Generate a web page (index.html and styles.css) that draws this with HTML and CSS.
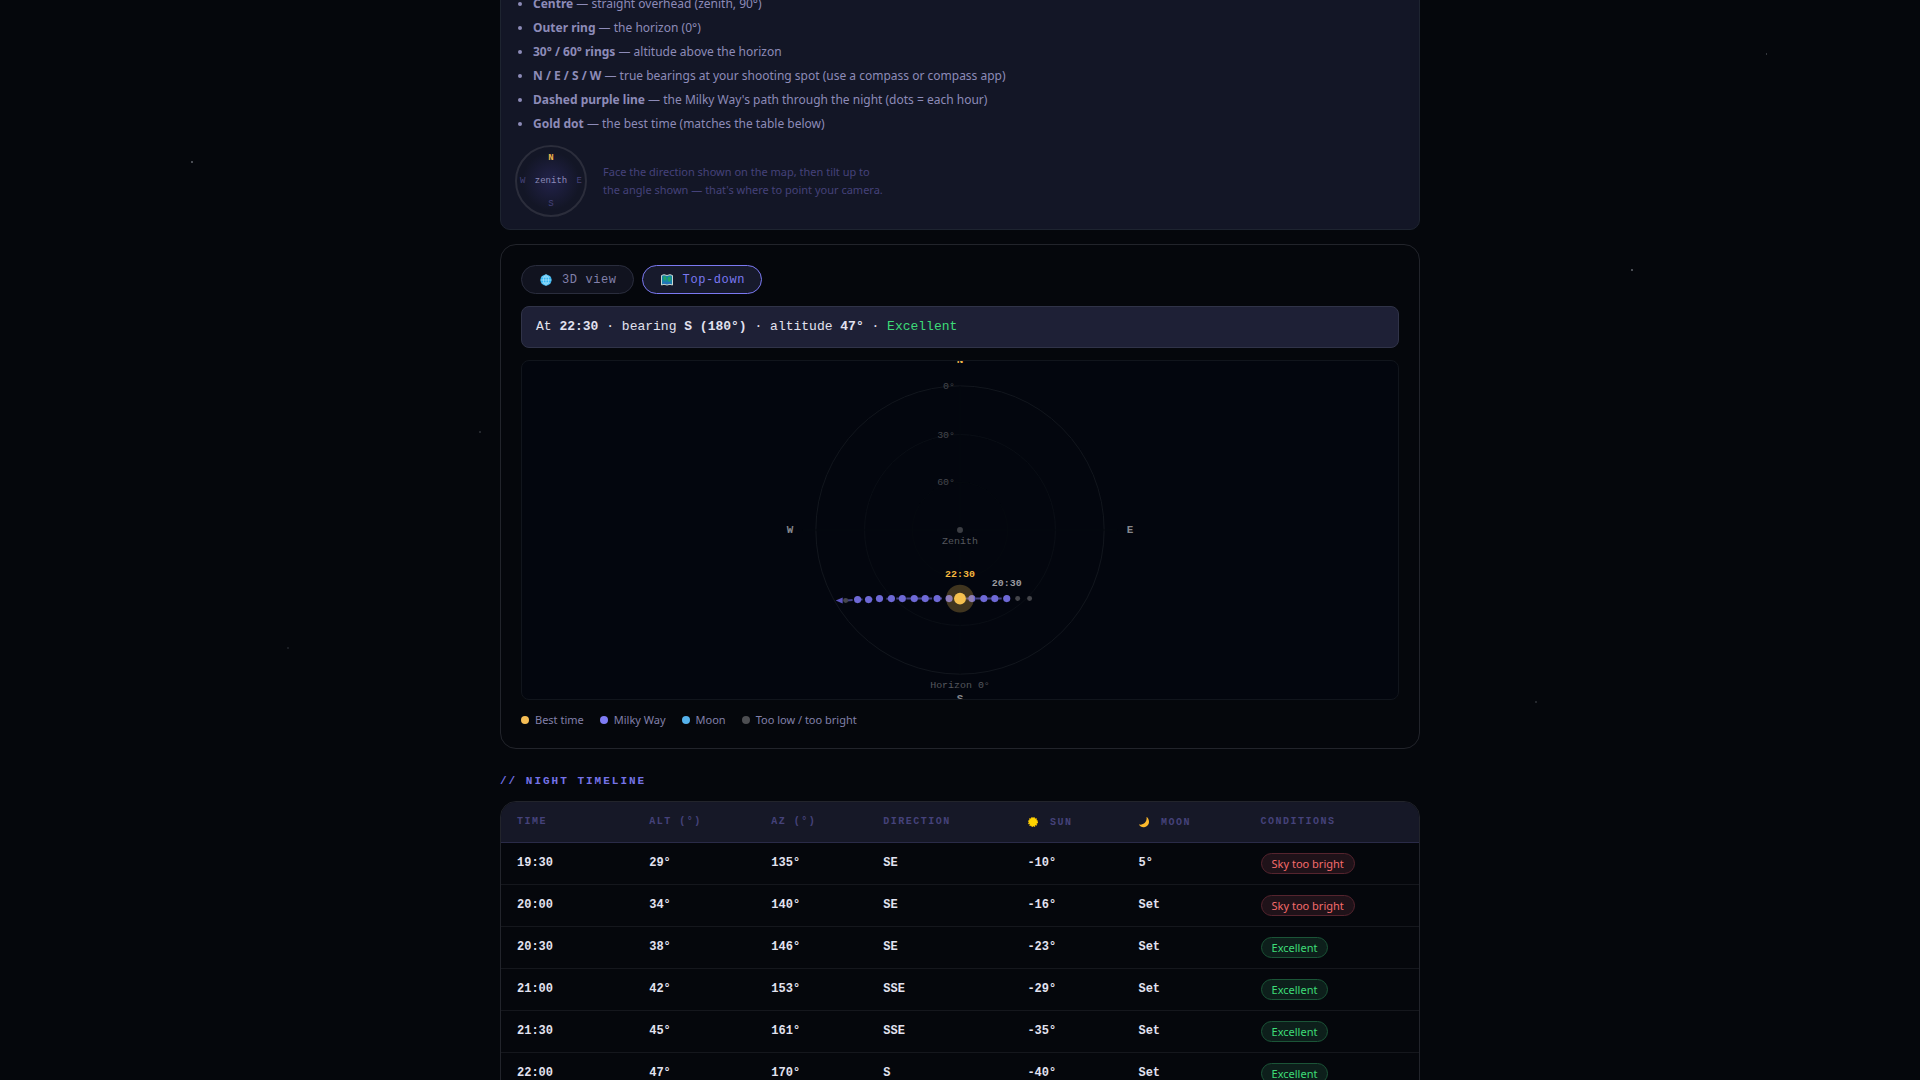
FILE: index.html
```
<!DOCTYPE html>
<html lang="en">
<head>
  <meta charset="UTF-8">
  <meta name="viewport" content="width=device-width, initial-scale=1.0">
  <title>Milky Way planner</title>
  <link rel="stylesheet" href="styles.css">
</head>
<body>

<main class="page">

  <!-- How to read the map -->
  <section class="guide">
    <ul class="guide-list">
      <li><strong>Centre</strong> — straight overhead (zenith, 90°)</li>
      <li><strong>Outer ring</strong> — the horizon (0°)</li>
      <li><strong>30° / 60° rings</strong> — altitude above the horizon</li>
      <li><strong>N / E / S / W</strong> — true bearings at your shooting spot (use a compass or compass app)</li>
      <li><strong>Dashed purple line</strong> — the Milky Way's path through the night (dots = each hour)</li>
      <li><strong>Gold dot</strong> — the best time (matches the table below)</li>
    </ul>
    <div class="guide-foot">
      <div class="compass">
        <span class="north">N</span>
        <div class="compass-mid"><span>W</span><span class="zenith">zenith</span><span>E</span></div>
        <span>S</span>
      </div>
      <p>Face the direction shown on the map, then tilt up to<br>the angle shown — that's where to point your camera.</p>
    </div>
  </section>

  <!-- Sky map -->
  <section class="map-card">
    <div class="tabs">
      <button type="button" class="tab">
        <svg class="icon" viewBox="0 0 12 12" aria-hidden="true">
          <circle cx="6" cy="6" r="5.6" fill="#35b6f2"/>
          <path d="M6 .5v11M.5 6h11M1.5 3h9M1.5 9h9M6 .5C2.4 3.5 2.4 8.5 6 11.5C9.6 8.5 9.6 3.5 6 .5" fill="none" stroke="#c4efff" stroke-width=".6"/>
        </svg>
        3D view
      </button>
      <button type="button" class="tab active">
        <svg class="icon" viewBox="0 0 12 12" aria-hidden="true">
          <path d="M.5 1.5L3 .7L6 1.5L9 .7L11.5 1.5V11L9 10.3L6 11L3 10.3L.5 11Z" fill="#1683a8" stroke="#c9d6d3" stroke-width="1"/>
          <path d="M2.5 2.5L5 2.2L5.5 5L4 7L2.5 5ZM7 3L9.5 2.5L10 6L8 8L6.5 5.5Z" fill="#22a565"/>
          <path d="M2 8.5L5 9.3L8 8.8L10 9.2" fill="none" stroke="#2f64c8"/>
        </svg>
        Top-down
      </button>
    </div>

    <div class="readout">At <strong>22:30</strong> · bearing <strong>S (180°)</strong> · altitude <strong>47°</strong> · <span class="good">Excellent</span></div>

    <svg class="sky" viewBox="-439 -170 878 340" role="img" aria-label="Top-down sky map">
      <g class="rings">
        <circle r="145" class="horizon"/>
        <circle r="96"/>
        <circle r="48" class="inner"/>
        <path d="M-158 0H158M0 -145V145" class="inner"/>
      </g>
      <g class="alt">
        <text x="-5" y="-142" text-anchor="end">0°</text>
        <text x="-5" y="-93" text-anchor="end">30°</text>
        <text x="-5" y="-45" text-anchor="end">60°</text>
      </g>
      <circle r="3" fill="#3c3e44"/>
      <g class="note">
        <text y="14">Zenith</text>
        <text y="159">Horizon 0°</text>
      </g>
      <g class="bearing">
        <text y="-168" class="north">N</text>
        <text x="171" y="3">E</text>
        <text y="173">S</text>
        <text x="-171" y="3">W</text>
      </g>

      <path d="M-114 71L-103 70L-69 69H47" class="track"/>
      <path d="M-125 71L-118 68V74Z" fill="#5c55bd"/>
      <g fill="#45464b">
        <circle cx="-115" cy="71" r="2.5"/>
        <circle cx="58" cy="69" r="2.5"/>
        <circle cx="70" cy="69" r="2.5"/>
      </g>
      <g fill="#6e69d6">
        <circle cx="-103" cy="70" r="3.6"/>
        <circle cx="-92" cy="70" r="3.6"/>
        <circle cx="-81" cy="69" r="3.6"/>
        <circle cx="-69" cy="69" r="3.6"/>
        <circle cx="-58" cy="69" r="3.6"/>
        <circle cx="-46" cy="69" r="3.6"/>
        <circle cx="-35" cy="69" r="3.6"/>
        <circle cx="-23" cy="69" r="3.6"/>
        <circle cx="-11" cy="69" r="3.6"/>
        <circle cx="12" cy="69" r="3.6"/>
        <circle cx="24" cy="69" r="3.6"/>
        <circle cx="35" cy="69" r="3.6"/>
        <circle cx="47" cy="69" r="3.6"/>
      </g>
      <circle cy="69" r="14" fill="#f9c455" opacity=".25"/>
      <circle cy="69" r="6" fill="#f5c04f"/>
      <text y="47" class="time best">22:30</text>
      <text x="47" y="56" class="time">20:30</text>
    </svg>

    <div class="legend">
      <span class="key gold">Best time</span>
      <span class="key purple">Milky Way</span>
      <span class="key blue">Moon</span>
      <span class="key grey">Too low / too bright</span>
    </div>
  </section>

  <!-- Timeline table -->
  <h2 class="section-title">// NIGHT TIMELINE</h2>
  <div class="table-wrap">
    <table>
      <colgroup>
        <col class="c-time"><col class="c-alt"><col class="c-az"><col class="c-dir"><col class="c-sun"><col class="c-moon"><col>
      </colgroup>
      <thead>
        <tr>
          <th>TIME</th>
          <th>ALT (°)</th>
          <th>AZ (°)</th>
          <th>DIRECTION</th>
          <th>
            <svg class="icon" viewBox="0 0 12 12" aria-hidden="true">
              <circle cx="6" cy="6" r="4.2" fill="#ffd400"/>
              <circle cx="6" cy="6" r="4.4" fill="none" stroke="#ffc800" stroke-width="1.2" stroke-dasharray="1.3 1"/>
            </svg>
            SUN
          </th>
          <th>
            <svg class="icon" viewBox="0 0 12 12" aria-hidden="true">
              <path d="M8.5 .8C12.6 4 11.6 10.8 6 11.2C3.8 11.4 1.8 10.2 .8 8.5C6 9.4 9.4 5.6 8.5 .8Z" fill="#fcb92c"/>
            </svg>
            MOON
          </th>
          <th>CONDITIONS</th>
        </tr>
      </thead>
      <tbody>
        <tr><td>19:30</td><td>29°</td><td>135°</td><td>SE</td><td>-10°</td><td>5°</td><td><span class="badge bad">Sky too bright</span></td></tr>
        <tr><td>20:00</td><td>34°</td><td>140°</td><td>SE</td><td>-16°</td><td>Set</td><td><span class="badge bad">Sky too bright</span></td></tr>
        <tr><td>20:30</td><td>38°</td><td>146°</td><td>SE</td><td>-23°</td><td>Set</td><td><span class="badge">Excellent</span></td></tr>
        <tr><td>21:00</td><td>42°</td><td>153°</td><td>SSE</td><td>-29°</td><td>Set</td><td><span class="badge">Excellent</span></td></tr>
        <tr><td>21:30</td><td>45°</td><td>161°</td><td>SSE</td><td>-35°</td><td>Set</td><td><span class="badge">Excellent</span></td></tr>
        <tr><td>22:00</td><td>47°</td><td>170°</td><td>S</td><td>-40°</td><td>Set</td><td><span class="badge">Excellent</span></td></tr>
      </tbody>
    </table>
  </div>

</main>

</body>
</html>
```
FILE: styles.css
```
* {
  box-sizing: border-box;
}

body {
  margin: 0;
  height: 100vh;
  overflow: hidden;
  color: #e2e2f0;
  font-family: "Noto Sans", sans-serif;
  font-size: 12px;
  background-color: #05070c;
  /* stars */
  background-image:
    radial-gradient(circle at 10% 15%, #4a4d54 1px, transparent 1px),
    radial-gradient(circle at 85% 25%, #4a4d54 1px, transparent 1px),
    radial-gradient(circle at 92% 5%, #33363c 1px, transparent 1px),
    radial-gradient(circle at 25% 40%, #24272d 1px, transparent 1px),
    radial-gradient(circle at 15% 60%, #1a1d23 1px, transparent 1px),
    radial-gradient(circle at 80% 65%, #24272d 1px, transparent 1px);
}

.page {
  max-width: 920px;
  margin: -21px auto 0;
}

/* Guide */
.guide {
  padding: 12px 14px;
  background: #131626;
  border: 1px solid #1e2430;
  border-radius: 10px;
  color: #8d8bb8;
}

.guide-list {
  margin: 0;
  padding-left: 18px;
  font-size: 12px;
  line-height: 24px;
}

.guide-foot {
  display: flex;
  align-items: center;
  gap: 16px;
  margin-top: 9px;
  color: #45427a;
}

.guide-foot p {
  margin: 0;
  font-size: 11px;
  line-height: 18px;
}

.compass {
  display: flex;
  flex-direction: column;
  align-items: center;
  justify-content: space-between;
  width: 72px;
  height: 72px;
  padding: 5px 3px;
  border: 2px solid #2b2d3b;
  border-radius: 50%;
  background: radial-gradient(circle, #22224a 0%, #131626 60%);
  font-family: "Liberation Mono", monospace;
  font-size: 9px;
  line-height: 12px;
}

.compass .north {
  color: #e9b34a;
  font-weight: bold;
}

.compass-mid {
  display: flex;
  justify-content: space-between;
  width: 100%;
}

.zenith {
  color: #8d8bb8;
}

/* Map */
.map-card {
  margin-top: 14px;
  padding: 20px;
  border: 1px solid #22242b;
  border-radius: 16px;
}

.tabs {
  display: flex;
  gap: 8px;
}

.tab {
  display: flex;
  align-items: center;
  gap: 10px;
  height: 29px;
  padding: 0 16px 0 18px;
  border: 1px solid #2a2d3d;
  border-radius: 15px;
  background: #11131f;
  color: #8280aa;
  font-family: "Liberation Mono", monospace;
  font-size: 12px;
  letter-spacing: 0.05em;
}

.tab.active {
  border-color: #7b79f2;
  background: #171a2c;
  color: #7b79f2;
}

.icon {
  width: 12px;
  height: 12px;
}

.readout {
  margin-top: 12px;
  padding: 10px 14px;
  border: 1px solid #303348;
  border-radius: 8px;
  background: #1e2036;
  font-family: "Liberation Mono", monospace;
  font-size: 13px;
  line-height: 20px;
}

.good {
  color: #3ddc78;
}

.sky {
  display: block;
  width: 100%;
  height: 340px;
  margin-top: 12px;
  border: 1px solid #11151c;
  border-radius: 8px;
  background: #03060e;
  font-family: "Liberation Mono", monospace;
  font-size: 10px;
  text-anchor: middle;
}

.rings {
  fill: none;
  stroke: #0a0e15;
}

.rings .horizon {
  stroke: #12161d;
}

.rings .inner {
  stroke: #05090f;
}

.alt {
  fill: #45474d;
}

.note {
  fill: #55575d;
}

.bearing {
  fill: #85878d;
  font-size: 11px;
  font-weight: bold;
}

.bearing .north {
  fill: #f0b94c;
}

.track {
  fill: none;
  stroke: #464487;
  stroke-width: 2;
  stroke-dasharray: 6 4;
}

.time {
  fill: #9b9ca1;
  font-weight: bold;
}

.time.best {
  fill: #f5b93f;
}

.legend {
  display: flex;
  gap: 16px;
  margin-top: 12px;
  color: #8280aa;
  font-size: 11px;
  line-height: 16px;
}

.key {
  display: flex;
  align-items: center;
  gap: 6px;
}

.key::before {
  content: "";
  width: 8px;
  height: 8px;
  border-radius: 50%;
}

.gold::before {
  background: #f5bd55;
}

.purple::before {
  background: #7f7cf5;
}

.blue::before {
  background: #55b2ec;
}

.grey::before {
  background: #4d4e52;
}

/* Timeline */
.section-title {
  margin: 24px 0 12px;
  color: #7573e8;
  font-family: "Liberation Mono", monospace;
  font-size: 11px;
  line-height: 16px;
  letter-spacing: 2px;
}

.table-wrap {
  overflow: hidden;
  border: 1px solid #22242b;
  border-radius: 16px;
}

table {
  width: 100%;
  table-layout: fixed;
  border-collapse: collapse;
  font-family: "Liberation Mono", monospace;
}

.c-time { width: 14.4%; }
.c-alt { width: 13.3%; }
.c-az { width: 12.2%; }
.c-dir { width: 15.7%; }
.c-sun { width: 12.1%; }
.c-moon { width: 13.3%; }

th {
  height: 40px;
  padding: 0 16px;
  border-bottom: 1px solid #2a2b48;
  background: #161827;
  color: #45427a;
  font-size: 10px;
  letter-spacing: 0.15em;
  text-align: left;
}

th .icon {
  margin-right: 3px;
  vertical-align: middle;
}

td {
  height: 42px;
  padding: 0 16px;
  border-bottom: 1px solid #15171d;
  font-size: 12px;
  font-weight: bold;
}

.badge {
  display: inline-block;
  padding: 0 10px;
  border: 1px solid #1b5437;
  border-radius: 11px;
  background: #0d1f1b;
  color: #3ddc78;
  font-family: "Noto Sans", sans-serif;
  font-size: 11px;
  font-weight: normal;
  line-height: 19px;
}

.badge.bad {
  border-color: #55242e;
  background: #1f1219;
  color: #f56b6b;
}
```
